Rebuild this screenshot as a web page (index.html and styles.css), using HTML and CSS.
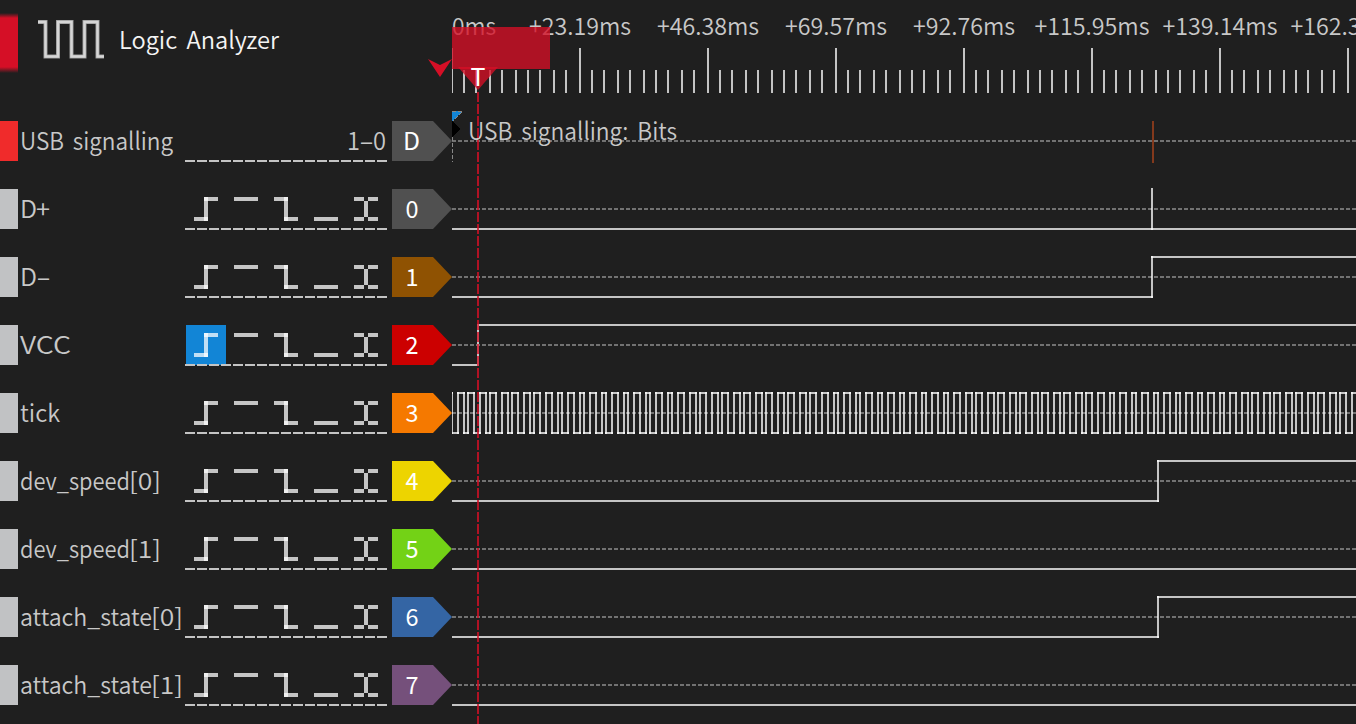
FILE: index.html
```html
<!DOCTYPE html>
<html lang="en">
<head>
<meta charset="utf-8">
<title>Logic Analyzer</title>
<link rel="stylesheet" href="styles.css">
</head>
<body>
<div class="app">
  <header class="header">
    <div class="brand">
      <div class="accent"></div>
      <svg class="logo" width="68" height="42" viewBox="0 0 68 42"><path class="logo-edge" d="M0 4H7.5V38.5H20V4H33.5V38.5H46.5V4H59.5V38.5H66"/><path class="logo-core" d="M0 4H7.5V38.5H20V4H33.5V38.5H46.5V4H59.5V38.5H66"/></svg>
      <svg class="title" width="180" height="44"><text x="-1" y="29" textLength="160" lengthAdjust="spacingAndGlyphs">Logic Analyzer</text></svg>
    </div>
    <svg class="ruler" id="ruler" width="904" height="107"></svg>
  </header>
  <main class="channels" id="channels"></main>
  <svg class="trigger" width="130" height="724">
    <path class="cursor-line" d="M54 92V724"/>
    <rect class="flag" x="28" y="27" width="98" height="42"/>
    <path class="flag" d="M34 67H74L54 90Z"/>
    <path class="cursor" d="M4 59L16 65L28 59L16 77Z"/>
    <text class="flag-text" x="46.5" y="86" textLength="15" lengthAdjust="spacingAndGlyphs">T</text>
  </svg>
</div>
<script src="app.js"></script>
</body>
</html>
```
FILE: styles.css
```css
* { box-sizing: border-box; }
body {
  margin: 0;
  background: #1f1f1f;
  overflow: hidden;
  font-family: "Noto Sans CJK JP", sans-serif;
  font-weight: 300;
}
svg { display: block; flex: none; }
text { font-size: 24px; fill: #c8c8c8; font-weight: 350; word-spacing: 4px; }
.app { position: relative; width: 1356px; height: 724px; overflow: hidden; }
.header { display: flex; height: 107px; }
.brand { display: flex; width: 452px; padding-top: 13px; }
.accent {
  width: 18px;
  height: 60px;
  background: linear-gradient(transparent, #d50f26 5px, #d50f26 54px, transparent);
}
.logo { margin: 5px 0 0 20px; }
.title { margin: 7px 0 0 14px; }
.title text { fill: #f4f4f4; }
.logo path { fill: none; }
.logo-edge { stroke: #999; stroke-width: 4; }
.logo-core { stroke: #d6d6d6; stroke-width: 2.4; }
.ruler .tick { fill: #c4c4c4; }
.row { display: flex; height: 68px; align-items: center; }
.swatch { width: 18px; height: 40px; background: #c1c2c4; flex: none; }
.swatch.decoder { background: #f02b2b; }
.name { width: 168px; height: 68px; }
.controls { width: 206px; height: 68px; margin-left: -1px; }
.tag { width: 61px; height: 68px; }
.tag text { fill: #fff; font-weight: 400; }
.wave { shape-rendering: crispEdges; }
.underline { stroke: #c4c4c4; stroke-width: 2; stroke-dasharray: 10 2; }
.glyph { fill: rgba(255, 255, 255, .74); }
.armed { fill: #1285d6; }
.midline { stroke: #727272; stroke-width: 2; stroke-dasharray: 4 2; }
.line { fill: rgba(255, 255, 255, .74); }
.bit { fill: #83391c; }
.start { fill: none; stroke: #888; stroke-width: 1; stroke-dasharray: 4 2; }
.trigger { position: absolute; left: 424px; top: 0; }
.cursor-line { stroke: #d50f26; stroke-opacity: .8; stroke-width: 2; stroke-dasharray: 10 2; }
.flag { fill: #d50f26; fill-opacity: .79; }
.cursor { fill: #d50f26; }
.flag-text { fill: #fff; font-weight: 400; }
```
FILE: app.js
```js
const rect = (c, x, y, w, h) => `<rect class="${c}" x="${x}" y="${y}" width="${w}" height="${h}"/>`;
const text = (s, x, y, w) => `<text x="${x}" y="${y}" textLength="${w}" lengthAdjust="spacingAndGlyphs">${s}</text>`;
const parts = (list, y) => `<text y="${y}">${list.map(([s, x, w]) =>
  `<tspan x="${x}" textLength="${w}" lengthAdjust="spacingAndGlyphs">${s}</tspan>`).join('')}</text>`;

/* Time ruler */
const minors = [12, 24, 38, 50, 64, 76, 88, 102, 114];
let ruler = text('0ms', 0, 35, 44);
[['+23.19ms', 102], ['+46.38ms', 102], ['+69.57ms', 102], ['+92.76ms', 102], ['+115.95ms', 115], ['+139.14ms', 115], ['+162.33ms', 115]]
  .forEach(([s, w], i) => { ruler += text(s, 128 * (i + 1) - w / 2, 35, w); });
for (let m = 0; m < 8; m++) {
  const x = m * 128 - 1;
  ruler += rect('tick', x, 48, 2, 45);
  minors.forEach(d => { ruler += rect('tick', x + d, 70, 2, 23); });
}
document.getElementById('ruler').innerHTML = ruler;

/* Trigger condition glyphs: rising, high, falling, low, any edge */
const glyphs = [
  [9, 42, 14, 4], [19, 22, 4, 24], [19, 22, 14, 4],
  [49, 22, 24, 4],
  [89, 22, 14, 4], [99, 22, 4, 24], [99, 42, 14, 4],
  [129, 42, 24, 4],
  [169, 22, 10, 4], [183, 22, 10, 4], [179, 26, 4, 16], [169, 42, 10, 4], [183, 42, 10, 4]
].map(g => rect('glyph', ...g)).join('');

/* Builds a level trace from a list of edge positions */
function trace(edges, level) {
  let out = '', x = 0;
  edges.forEach(e => {
    out += rect('line', x, level ? 13 : 53, e + 2 - x, 2) + rect('line', e, 13, 2, 42);
    x = e;
    level = !level;
  });
  return out + rect('line', x, level ? 13 : 53, 904 - x, 2);
}

const clock = [];
for (let k = -3; k < 162; k++) clock.push(15 + 6 * k - 2 * Math.floor(0.24 * k + 0.14));

const usb = rect('bit', 700, 14, 2, 42) + text('USB signalling: Bits', 16, 33, 209) +
  '<path fill="#1285d6" d="M0 4H10L0 14Z"/><path class="start" d="M0 4.5H11M10 5L0 15M.5 30V55"/><path fill="#000" d="M0 13L8 22L0 30Z"/>';

const rows = [
  { name: [['USB signalling', 2, 153]], tag: 'D', color: '#505050', wave: usb, decoder: true },
  { name: [['D', 2, 17], ['+', 18, 14]], tag: '0', color: '#505050', wave: rect('line', 699, 13, 2, 42) + trace([], 0) },
  { name: [['D', 2, 17], ['-', 18, 15]], tag: '1', color: '#8f5202', wave: trace([699], 0) },
  { name: [['VCC', 2, 51]], tag: '2', color: '#cc0000', wave: trace([25], 0), armed: true },
  { name: [['tick', 2, 40]], tag: '3', color: '#f57900', wave: trace(clock, 1) },
  { name: [['dev_speed', 2, 110], ['[0]', 111, 32]], tag: '4', color: '#edd400', wave: trace([705], 0) },
  { name: [['dev_speed', 2, 110], ['[1]', 111, 32]], tag: '5', color: '#73d216', wave: trace([], 0) },
  { name: [['attach_state', 2, 132], ['[0]', 133, 32]], tag: '6', color: '#3465a4', wave: trace([705], 0) },
  { name: [['attach_state', 2, 132], ['[1]', 133, 32]], tag: '7', color: '#75507b', wave: trace([], 0) }
];

document.getElementById('channels').innerHTML = rows.map(r => `
  <section class="row">
    <div class="swatch${r.decoder ? ' decoder' : ''}"></div>
    <svg class="name">${parts(r.name, 43)}</svg>
    <svg class="controls">${r.armed ? rect('armed', 1, 14, 40, 40) : ''}${r.decoder ? parts([['1', 162, 13], ['-', 174, 15], ['0', 188, 13]], 43) : glyphs}<path class="underline" d="M0 54H202"/></svg>
    <svg class="tag"><path fill="${r.color}" d="M1 14H42L61 34L42 54H1Z"/>${r.tag === 'D' ? text('D', 12, 43, 17) : text(r.tag, 14.5, 43, 13)}</svg>
    <svg class="wave" width="904" height="68"><path class="midline" d="M0 34H904"/>${r.wave}</svg>
  </section>`).join('');
```
